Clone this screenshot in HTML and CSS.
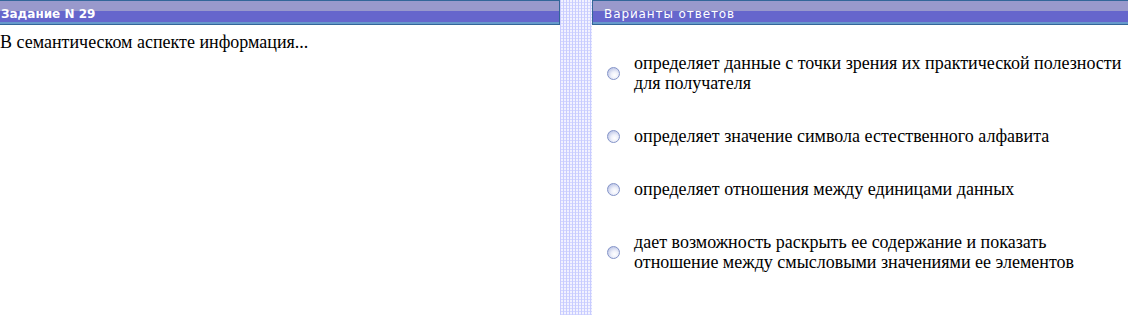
FILE: index.html
```html
<!DOCTYPE html>
<html lang="ru">
<head>
    <meta charset="UTF-8">
    <title>Задание N 29</title>
    <link rel="stylesheet" href="styles.css">
</head>
<body>

<div class="page">
    <div class="panel panel-task">
        <div class="head head-task">Задание N 29</div>
        <div class="question">В семантическом аспекте информация...</div>
    </div>

    <div class="divider"></div>

    <div class="panel panel-answers">
        <div class="head head-answers">Варианты ответов</div>
        <ul class="answers">
            <li class="answer">
                <span class="radio"></span>
                <span class="answer-text">определяет данные с точки зрения их практической полезности<br>для получателя</span>
            </li>
            <li class="answer">
                <span class="radio"></span>
                <span class="answer-text">определяет значение символа естественного алфавита</span>
            </li>
            <li class="answer">
                <span class="radio"></span>
                <span class="answer-text">определяет отношения между единицами данных</span>
            </li>
            <li class="answer">
                <span class="radio"></span>
                <span class="answer-text">дает возможность раскрыть ее содержание и показать<br>отношение между смысловыми значениями ее элементов</span>
            </li>
        </ul>
    </div>
</div>

</body>
</html>
```

FILE: styles.css
```css
* {
    margin: 0;
    padding: 0;
}

html, body {
    width: 1128px;
    height: 315px;
    overflow: hidden;
    background-color: #ffffff;
}

.page {
    display: flex;
    height: 315px;
}

.panel {
    display: flex;
    flex-direction: column;
}

.panel-task {
    width: 560px;
}

.panel-answers {
    flex: 1;
}

/* полоса между панелями - мелкая сетка */
.divider {
    width: 32px;
    background-color: #f2f2ff;
    background-image:
        linear-gradient(90deg, #c8ccff 1px, transparent 1px),
        linear-gradient(0deg, #d4d7ff 1px, transparent 1px);
    background-size: 3px 3px;
}

/* шапка панели: две полосы и нижняя линия */
.head {
    height: 25px;
    box-sizing: border-box;
    padding-top: 8px;
    color: #ffffff;
    font-family: "DejaVu Sans", Tahoma, sans-serif;
    font-size: 12px;
    line-height: 13px;
    white-space: nowrap;
    background: linear-gradient(to bottom,
        #336699 0, #336699 1px,
        #9999cc 1px, #9999cc 11px,
        #6666cc 11px, #6666cc 22px,
        #6699cc 22px, #6699cc 24px,
        #336699 24px, #336699 25px);
}

.head-task {
    padding-left: 1px;
    font-weight: bold;
    border-right: 1px solid #336699;
}

.head-answers {
    padding-left: 11px;
    letter-spacing: 0.9px;
    border-left: 1px solid #336699;
}

.question {
    margin-top: 7px;
    font-family: "Liberation Serif", "Times New Roman", serif;
    font-size: 18px;
    line-height: 20px;
    color: #000000;
}

.answers {
    list-style: none;
    display: flex;
    flex-direction: column;
    gap: 33px;
    padding-top: 28px;
    padding-left: 15px;
}

.answer {
    display: flex;
    align-items: center;
    gap: 14px;
}

.radio {
    flex: none;
    width: 11px;
    height: 11px;
    border-radius: 50%;
    border: 1px solid #8494c8;
    background: radial-gradient(circle at 60% 65%, #ffffff 0, #eef0fa 35%, #bcc5e6 80%, #a2aedb 100%);
}

.answer-text {
    font-family: "Liberation Serif", "Times New Roman", serif;
    font-size: 18px;
    line-height: 20px;
    color: #000000;
    white-space: nowrap;
}
```
